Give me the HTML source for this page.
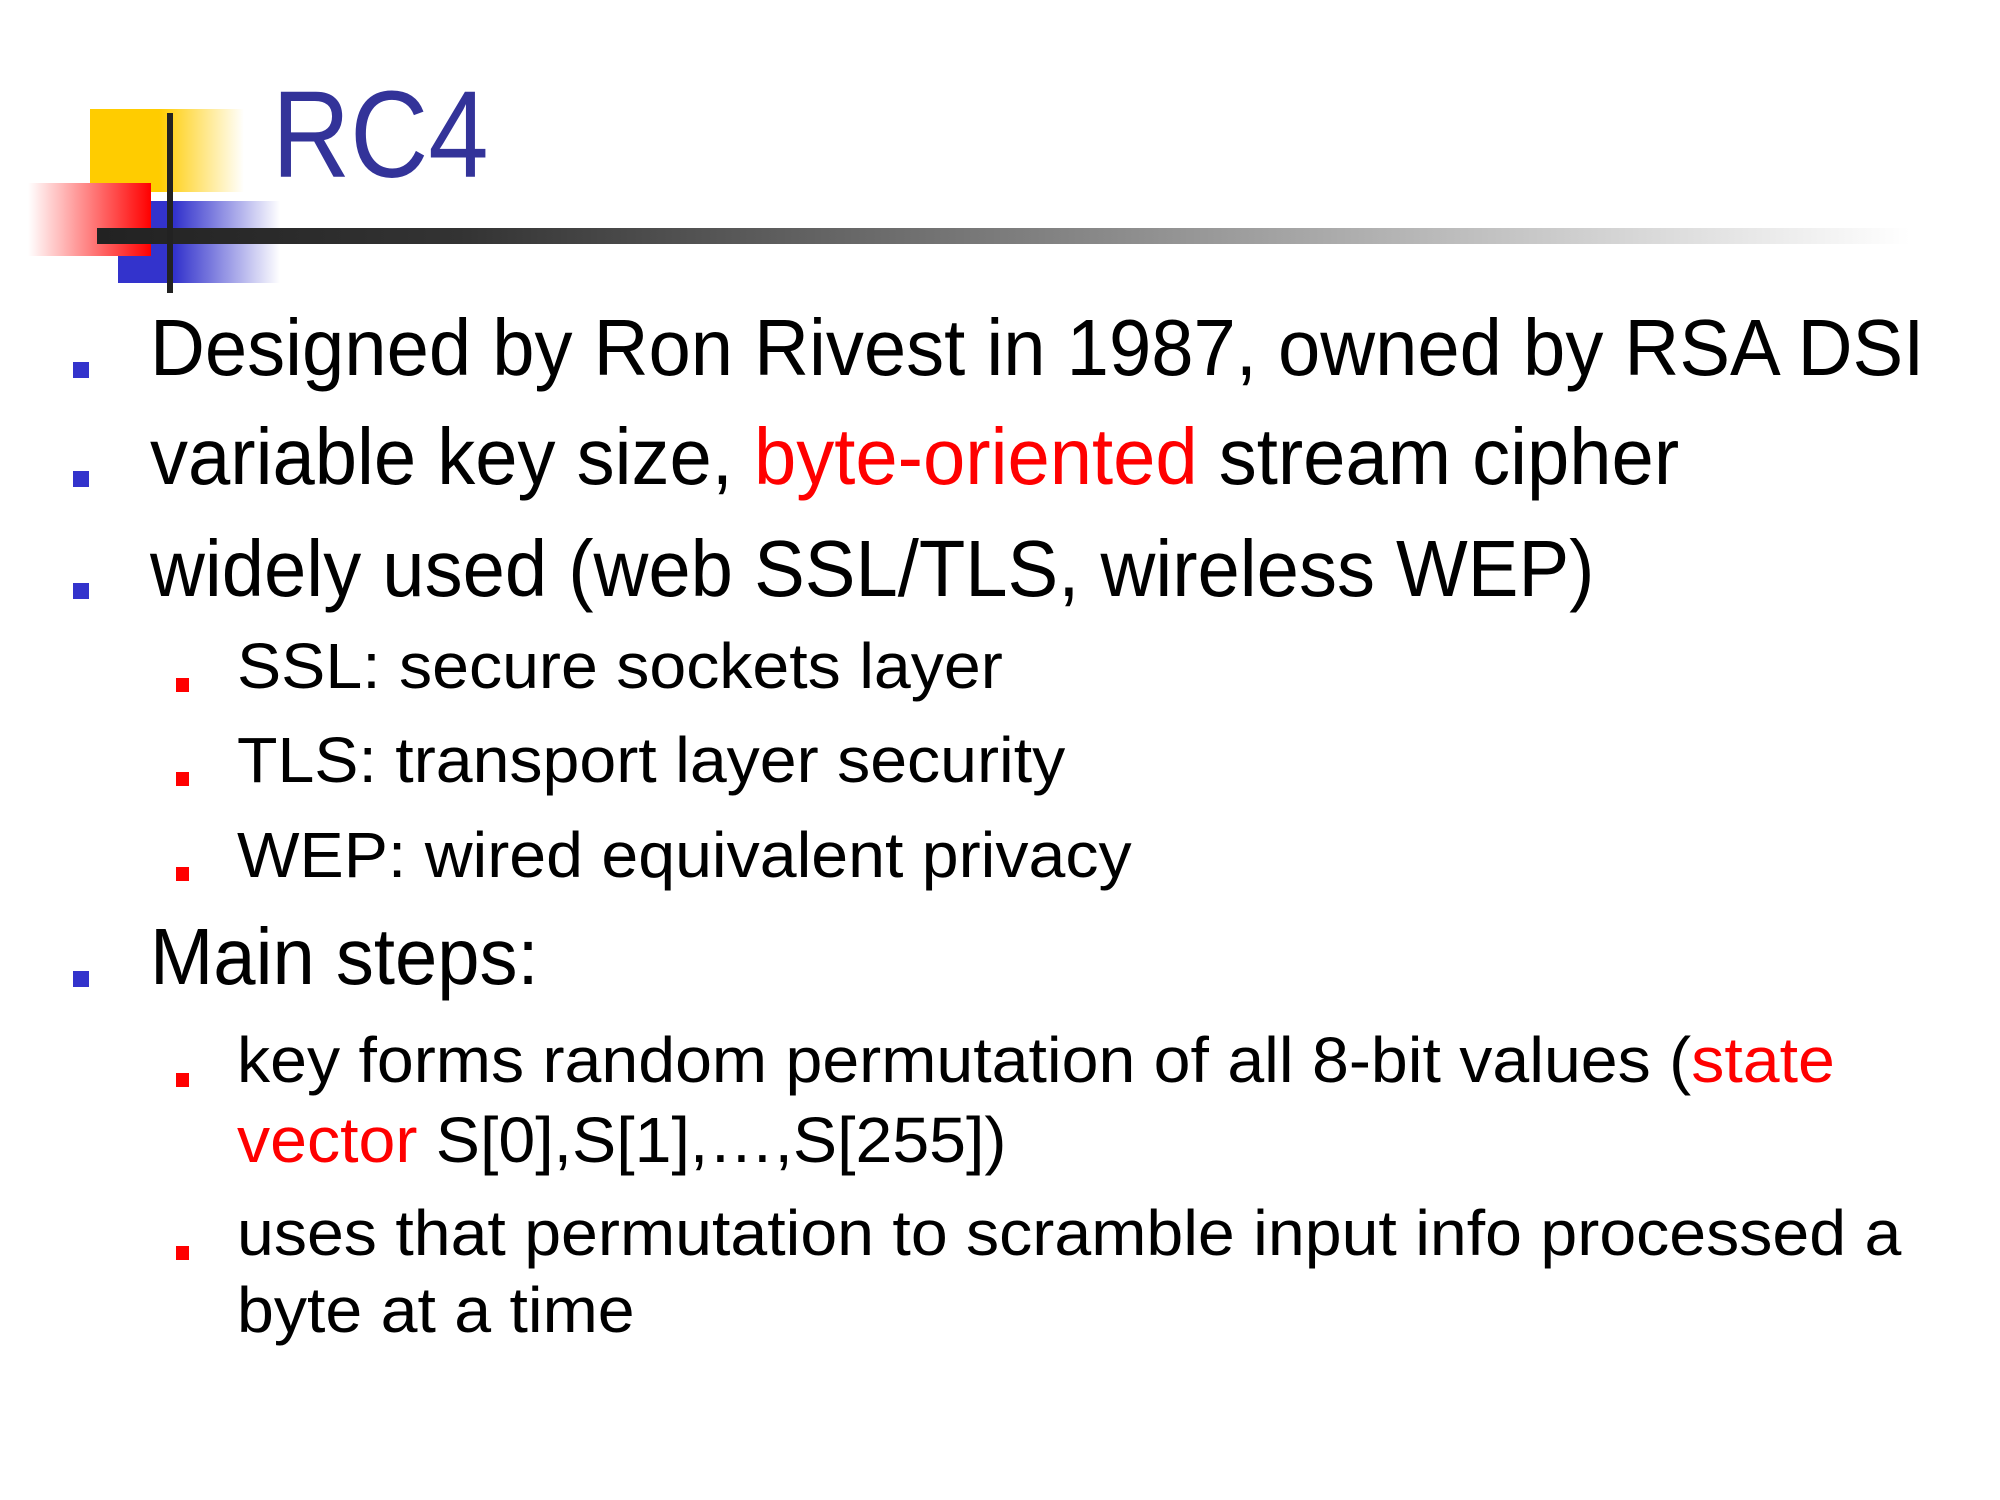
<!DOCTYPE html>
<html><head><meta charset="utf-8"><style>
html,body{margin:0;padding:0;background:#fff;}
body{width:2000px;height:1500px;position:relative;overflow:hidden;font-family:"Liberation Sans","DejaVu Sans",sans-serif;}
.a{position:absolute;}
.t{position:absolute;white-space:nowrap;line-height:1;color:#000;transform-origin:0 0;}
.l1{font-size:80px;left:150px;transform:scaleX(0.95);}
.l2{font-size:64px;left:237px;transform:scaleX(1.035);}
.b1{position:absolute;left:73px;width:16px;height:16px;background:#3333CC;}
.b2{position:absolute;left:176px;width:13px;height:14px;background:#FF0000;}
.r{color:#FF0000;}
</style></head><body>
<div class="a" style="left:90px;top:109px;width:154px;height:83px;background:linear-gradient(to right,#FFCC00 0%,#FFCC00 45%,#fff 100%);"></div>
<div class="a" style="left:118px;top:201px;width:162px;height:82px;background:linear-gradient(to right,#3333CC 0%,#3333CC 35%,#fff 100%);"></div>
<div class="a" style="left:28px;top:183px;width:123px;height:73px;background:linear-gradient(to right,#fff 0%,#FF0000 100%);"></div>
<div class="a" style="left:97px;top:228px;width:1813px;height:16px;background:linear-gradient(to right,#222 0%,#333 20%,#888 55%,#fff 100%);"></div>
<div class="a" style="left:167px;top:113px;width:6px;height:180px;background:#222;"></div>
<div class="t" style="left:272px;top:74px;font-size:123px;color:#333399;transform:scaleX(0.88);">RC4</div>

<div class="b1" style="top:362px;"></div>
<div class="t l1" style="top:308px;">Designed by Ron Rivest in 1987, owned by RSA DSI</div>
<div class="b1" style="top:471px;"></div>
<div class="t l1" style="top:417px;">variable key size, <span class="r">byte-oriented</span> stream cipher</div>
<div class="b1" style="top:583px;"></div>
<div class="t l1" style="top:529px;">widely used (web SSL/TLS, wireless WEP)</div>

<div class="b2" style="top:678px;"></div>
<div class="t l2" style="top:634px;">SSL: secure sockets layer</div>
<div class="b2" style="top:772px;"></div>
<div class="t l2" style="top:728px;">TLS: transport layer security</div>
<div class="b2" style="top:867px;"></div>
<div class="t l2" style="top:823px;">WEP: wired equivalent privacy</div>

<div class="b1" style="top:971px;"></div>
<div class="t l1" style="top:917px;">Main steps:</div>

<div class="b2" style="top:1073px;"></div>
<div class="t l2" style="top:1028px;">key forms random permutation of all 8-bit values (<span class="r">state</span></div>
<div class="t l2" style="top:1108px;"><span class="r">vector</span> S[0],S[1],…,S[255])</div>
<div class="b2" style="top:1246px;"></div>
<div class="t l2" style="top:1201px;">uses that permutation to scramble input info processed a</div>
<div class="t l2" style="top:1278px;">byte at a time</div>
</body></html>
